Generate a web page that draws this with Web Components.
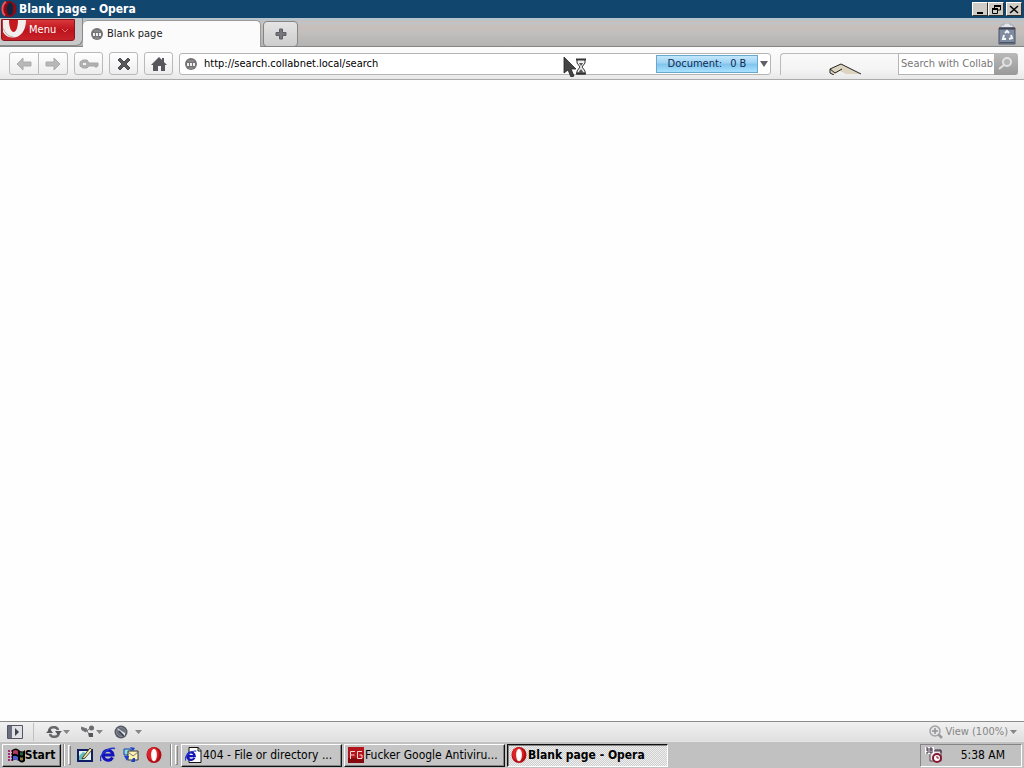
<!DOCTYPE html>
<html lang="en">
<head>
<meta charset="utf-8">
<title>Blank page - Opera</title>
<style>
html, body { margin: 0; height: 100%; }
body { font: 11px/14px "DejaVu Sans Condensed", "Noto Sans", sans-serif; color: #000; overflow: hidden; }
</style>
</head>
<body>
<opera-desktop></opera-desktop>
<script>
const reset = `*{box-sizing:border-box} button,input{font:inherit;color:inherit;margin:0;padding:0;border:0;background:none;border-radius:0;min-width:0;outline:0}
button{display:flex;align-items:center;justify-content:center;white-space:nowrap}`;

function define(name, css, html) {
  customElements.define(name, class extends HTMLElement {
    constructor() {
      super();
      this.attachShadow({ mode: 'open' }).innerHTML = `<style>${reset}${css}</style>${html}`;
    }
  });
}

const opera = `<ellipse cx="8" cy="8" rx="7.5" ry="8" fill="#b30d14"/><ellipse cx="7" cy="7" rx="6" ry="6.5" fill="#dc2228"/><ellipse cx="8" cy="8" rx="3" ry="6.3" fill="#f3e2e0"/><ellipse cx="8" cy="8" rx="1.8" ry="5.500" fill="#fff"/>`;
const ie = `<path d="M12.5 10.500A5 5 0 1 1 13 8H4.500" fill="none" stroke="#1414b8" stroke-width="3"/><path d="M1 14C-2 9 8 0 15 1.500" fill="none" stroke="#2038d0" stroke-width="1.500"/>`;
const icons = {
  opera: [16, 16, opera],
  operaDark: [16, 16, `<ellipse cx="8" cy="8" rx="7.5" ry="8" fill="#8e0b14"/><path d="M5 1C1 3 0 11 4 14.500" stroke="#ee535a" stroke-width="2" fill="none"/><ellipse cx="9" cy="8" rx="3.200" ry="6.500" fill="#102640"/>`],
  menuO: [24, 18, `<path d="M1 0H24C24 10 19 17.500 11 17.500Q4 17.500 1 12Z" fill="#f1eeee"/><path d="M7 0H16C16 8 14 12 11.500 12S7 7 7 0Z" fill="#c51920"/><path d="M1 8Q4 16 11 17" stroke="#b5abab" fill="none"/>`],
  globe: [12, 12, `<circle cx="6" cy="6" r="6" fill="#747476"/><path d="M2 5h2v3H2zM5 5h2v3H5zM8 5h2v3H8z" fill="#eee"/><path d="M3 3h6M4 10h4" stroke="#999"/>`],
  plus: [12, 12, `<path d="M4.500 1h3v3.500H11v3H7.500V11h-3V7.500H1v-3h3.500z" fill="#77767f" stroke="#5d5d63"/>`],
  back: [16, 14, `<path d="M7 1 1 7l6 6V9h8V5H7z" fill="#b8b8b8" stroke="#aaa"/>`],
  forward: [16, 14, `<path d="m9 1 6 6-6 6V9H1V5h8z" fill="#b8b8b8" stroke="#aaa"/>`],
  key: [20, 10, `<path d="M4 1h4l2 3h9v3h-1v1h-2V7h-6L8 9H4L1 7V3z" fill="#b0b0b0" stroke="#a5a5a5"/><path d="M4 4h3v2H4z" fill="#f4f4f4"/>`],
  stop: [16, 16, `<path d="m2 4 2-2 4 4 4-4 2 2-4 4 4 4-2 2-4-4-4 4-2-2 4-4z" fill="#58585b" stroke="#4a4a4d"/>`],
  home: [16, 16, `<path d="M0 9 8 1l3 3V2h2v4l3 3h-2v6h-4v-5H7v5H2V9z" fill="#57575b"/>`],
  down: [8, 6, `<path d="M0 0h8L4 6z" fill="#606068"/>`],
  downSmall: [7, 4, `<path d="M0 0h7L3.500 4z" fill="#85858a"/>`],
  chevron: [8, 5, `<path d="m1 1 3 3 3-3" fill="none" stroke="#e0736f"/>`],
  search: [16, 16, `<circle cx="9" cy="6" r="4" fill="#b5b5b5" stroke="#e2e2e2" stroke-width="2"/><path d="m6 9-5 4" stroke="#e2e2e2" stroke-width="2"/>`],
  trash: [18, 22, `<path d="M1 5h16v16H1z" fill="#7f8ba0" stroke="#4a5265"/><path d="M2 19.500h14" stroke="#4a5265"/><path d="M1 5.500h16" stroke="#3c4353" stroke-width="2"/><path d="M3 4V2h3V0h6v2h3v2" fill="#e4e8ec" stroke="#a2a8b0"/><path d="m7 10 2-2 2 2M13 12l1 3-3 1M8 16H5l1-4" stroke="#f4f6fa" stroke-width="2" fill="none"/>`],
  panel: [16, 14, `<path d="M.5.5h15v13H.500z" fill="#e1e1e5" stroke="#515566"/><path d="M1 1h4v12H1z" fill="#696e7d"/><path d="m8 3 4 4-4 4z" fill="#3d4354"/>`],
  sync: [16, 12, `<path d="M3 6C3 0 11 0 12 4M13 6C13 12 5 12 4 8" fill="none" stroke="#68686d" stroke-width="2.500"/><path d="M9 5h7l-4 4zM0 7h7L4 3z" fill="#55555b"/>`],
  unite: [14, 13, `<circle cx="10.500" cy="3" r="2.500" fill="#6a6a6f"/><path d="M7 8h5v4H8z" fill="#55555b"/><path d="m0 2 6 2-1 3-4-2zM6 6l3-3M6 6l2 3" fill="#707075" stroke="#77777b"/>`],
  turbo: [14, 14, `<circle cx="7" cy="7" r="6.500" fill="#565a66"/><circle cx="7" cy="7" r="4.500" fill="#697080" stroke="#85898f"/><path d="M3 3 11 8v3L7 9z" fill="#e2e4e6"/><path d="m5 6 5 5" stroke="#393d48" stroke-width="1.500"/>`],
  zoom: [14, 14, `<path d="m9 9 4 4" stroke="#999" stroke-width="2.500"/><circle cx="6" cy="6" r="5" fill="#e6e6e6" stroke="#a2a2a6" stroke-width="1.500"/><path d="M3 6h6M6 3v6" stroke="#929296" stroke-width="1.500"/>`],
  windows: [17, 15, `<path d="M0 3h4M0 6h4M0 9h4M0 12h4" stroke="#a02f77" stroke-width="2" stroke-dasharray="2 1"/><path d="M4 2q4-3 7 0t6 0v11q-3 3-6 0t-7 0z" fill="#000"/><path d="M5 3q3-2 5 0v4q-2-2-5-1z" fill="#b8355c"/><path d="M12 4q2 1 3 0v3q-1 1-3 0z" fill="#276044"/><path d="M5 8q3-1 5 1v4q-2-2-5-1z" fill="#5358d0"/><path d="M12 9q2 1 3 0v3q-1 1-3 0z" fill="#8f813b"/>`],
  desktop: [16, 16, `<path d="M1 3h14v11H1z" fill="#e3f1ee" stroke="#101c66" stroke-width="2"/><path d="M2 13v-4l4-4 3 1-1 6z" fill="#65bab5"/><path d="m6 10 7-9 2 2-7 8-3 1z" fill="#f4e8a0" stroke="#222" stroke-width=".8"/>`],
  ie: [16, 16, ie],
  iePage: [17, 16, `<path d="M4 .5h9l3 3v12H4z" fill="#fff" stroke="#111"/><path d="M13 0v4h3" fill="none" stroke="#111"/><g transform="translate(0 3) scale(.75)">${ie}</g>`],
  mail: [16, 16, `<path d="M1 2h7v6H1z" fill="#8bdce5" stroke="#183ba0"/><path d="M5 4h10v9H5z" fill="#fff3b0" stroke="#333"/><path d="m5 5 5 4 5-4" fill="none" stroke="#777"/><path d="m7 0 5 1-2 3zM1 9l3 5 2-5M10 11h2v4h-4" fill="#193ed1"/>`],
  fg: [16, 16, `<path d="M0 0h16v16H0z" fill="#b4141b"/><path d="M0 11h16v5H0z" fill="#85090e"/><path d="M2.500 12V4.500H7M3 8h3.500M14 4.500H9.500v7H14V8h-2.500" stroke="#f5d7d5" fill="none"/>`],
  tray: [17, 16, `<path d="M5 4h11v10H5z" fill="#e8e8e8" stroke="#5c4056"/><path d="M0 0h9v7H0z" fill="#fff"/><path d="M1 1h2v5H1M1 3h2M5 1h2v5H5zM5 3h2M10 3h6v3" fill="none" stroke="#39263f"/><circle cx="12" cy="11" r="4" fill="#fff" stroke="#8a1732" stroke-width="2"/><path d="M12 9v2h2" stroke="#811126" fill="none"/>`],
  min: [10, 9, `<path d="M2 7h6v2H2z"/>`],
  restore: [10, 9, `<path d="M3.500 3V.5h6V5H7M1.500 3.500h5v5h-5z" fill="none" stroke="#000"/><path d="M3 1h7M1 4h6" stroke="#000" stroke-width="2"/>`],
  close: [10, 9, `<path d="m1 1 8 7M9 1 1 8" stroke="#000" stroke-width="1.500"/>`],
  ledge: [34, 12, `<path d="M2 6 13 1 33 11H18L12 8 5 12 2 10z" fill="#dcd4be"/><path d="M2 10V6L13 1l20 10M2 6l5 4 7-4M2 10l4 2" stroke="#222" fill="none"/>`],
  cursor: [24, 20, `<path d="M1 0v16l4-3 3 7 3-1-3-7h5z" fill="#444" stroke="#222" stroke-width=".8"/><path d="M14 3v3l3 4-3 4v3h8v-3l-3-4 3-4V3" fill="#eee" stroke="#333"/><path d="M13 2.500h10M13 16.500h10" stroke="#333" stroke-width="2"/><path d="M16 6h4l-2 3zM15 16l3-4 3 4z" fill="#555"/>`]
};

customElements.define('ui-icon', class extends HTMLElement {
  connectedCallback() {
    if (this.shadowRoot) return;
    const [w, h, art] = icons[this.getAttribute('name')];
    this.attachShadow({ mode: 'open' }).innerHTML = `<style>:host{display:block;flex:none}svg{display:block}</style><svg width="${w}" height="${h}" viewBox="0 0 ${w} ${h}" aria-hidden="true">${art}</svg>`;
  }
});

define('title-bar', `
:host{display:flex;align-items:center;height:18px;background:#11466f;color:#fff;padding:0 2px 0 1px;gap:2px}
h1{flex:1;margin:0;font-size:12px;line-height:18px;font-weight:bold}
.buttons{display:flex}
button{width:16px;height:14px;background:#d0ccc6;border:1px solid;border-color:#fff #333 #333 #fff}
button:last-child{margin-left:2px}`,
`<ui-icon name="operaDark"></ui-icon><h1>Blank page - Opera</h1><div class="buttons"><button aria-label="Minimize"><ui-icon name="min"></ui-icon></button><button aria-label="Restore"><ui-icon name="restore"></ui-icon></button><button aria-label="Close"><ui-icon name="close"></ui-icon></button></div>`);

define('tab-strip', `
:host{display:flex;height:29px;background:linear-gradient(#b8c4cb 0 3px,#d2bbb3 3px 4px,#c0c4c7 4px 6px,#c8beb9 8px,#c2bfbd 14px,#b2b2b2);box-shadow:inset 0 -1px #858585;color:#222}
.corner{width:83px;height:28px;padding:1px 0 0 1px;border-radius:0 0 7px 0;border-right:1px solid #888;border-bottom:1px solid #888;background:linear-gradient(#c5c9cc,#c9c9c9)}
.menu{width:74px;height:22px;justify-content:flex-start;align-items:flex-start;border:1px solid #8b1620;border-radius:0 0 3px 3px;background:linear-gradient(#d9383b,#bd141c 50%,#c8232a);color:#fff;gap:3px}
.menu span{line-height:20px;padding-right:2px}
.menu ui-icon:last-child{padding-top:8px}
.tab{width:178px;margin-top:2px;justify-content:flex-start;background:#fbfbfb;border:1px solid #999;border-width:1px 1px 0 0;border-radius:5px 5px 0 0;padding:0 8px;gap:4px}
.add{width:35px;height:26px;margin:3px 0 0 2px;border:1px solid #858585;border-radius:4px;background:linear-gradient(#e4e4e4,#cdcdcd)}
.trash{margin:5px 8px 0 auto;width:18px;height:22px}`,
`<div class="corner"><button class="menu"><ui-icon name="menuO"></ui-icon><span>Menu</span><ui-icon name="chevron"></ui-icon></button></div><button class="tab"><ui-icon name="globe"></ui-icon><span>Blank page</span></button><button class="add" aria-label="New tab"><ui-icon name="plus"></ui-icon></button><button class="trash" aria-label="Closed tabs"><ui-icon name="trash"></ui-icon></button>`);

define('nav-bar', `
:host{display:flex;align-items:center;height:33px;padding:1px 6px 0 9px;gap:6px;background:linear-gradient(#fcfcfc,#f4f4f4 70%,#e8e8e8);border-bottom:1px solid #aaa}
.tool{width:29px;height:23px;border:1px solid #b9b9b9;border-radius:3px;background:linear-gradient(#fff,#ededed)}
.pair{display:flex}.pair .tool:first-child{width:30px;border-radius:3px 0 0 3px}.pair .tool:last-child{border-left:0;border-radius:0 3px 3px 0}
.address{flex:1;min-width:0;display:flex;align-items:center;height:22px;border:1px solid #b5b5b5;border-radius:3px;background:#fff;padding-left:5px;gap:7px}
.address input{flex:1;height:18px;line-height:18px}
.progress{width:102px;height:18px;border:1px solid #69a8ca;background:linear-gradient(#c4e8fc,#9cd2f5 45%,#7fc3ed 50%,#a9e2ff);display:flex;align-items:center;justify-content:center;gap:8px;color:#102b50;margin-right:-7px}
.drop{width:12px;height:18px}
.slot{width:118px;height:22px;margin-left:3px;border:1px solid #bbb;border-width:1px 0 0 1px;border-radius:4px 0 0 0;display:flex;justify-content:center;align-items:flex-end;padding-left:10px}
.find{display:flex;height:22px;margin-left:-6px;width:120px}
.find input{flex:1;border:1px solid #b5b5b5;border-right:0;background:#fff;padding-left:2px}
.find input::placeholder{color:#777;opacity:1}
.find button{width:24px;background:linear-gradient(#b9b9b9,#999);border-radius:0 3px 3px 0}`,
`<div class="pair"><button class="tool" aria-label="Back"><ui-icon name="back"></ui-icon></button><button class="tool" aria-label="Forward"><ui-icon name="forward"></ui-icon></button></div><button class="tool" aria-label="Wand"><ui-icon name="key"></ui-icon></button><button class="tool" aria-label="Stop"><ui-icon name="stop"></ui-icon></button><button class="tool" aria-label="Home"><ui-icon name="home"></ui-icon></button>
<div class="address"><ui-icon name="globe"></ui-icon><input aria-label="Address" value="http://search.collabnet.local/search"><div class="progress"><span>Document:</span><span>0 B</span></div><button class="drop" aria-label="Address history"><ui-icon name="down"></ui-icon></button></div>
<div class="slot"><ui-icon name="ledge"></ui-icon></div><div class="find"><input aria-label="Search" placeholder="Search with Collab'"><button aria-label="Search"><ui-icon name="search"></ui-icon></button></div>`);

define('status-bar', `
:host{display:flex;align-items:center;height:20px;padding:0 7px;background:linear-gradient(#f1f1f1,#e0e0e0);border-top:1px solid #8d8d8d;color:#858585}
button{height:18px}.group{display:flex;gap:11px;margin-left:10px;padding-left:12px;border-left:1px solid #c0c0c0}.group button{gap:1px}.group button:last-child{gap:7px}.view{margin-left:auto;gap:2px}`,
`<button aria-label="Panels"><ui-icon name="panel"></ui-icon></button><div class="group"><button aria-label="Synchronize"><ui-icon name="sync"></ui-icon><ui-icon name="downSmall"></ui-icon></button><button aria-label="Unite"><ui-icon name="unite"></ui-icon><ui-icon name="downSmall"></ui-icon></button><button aria-label="Turbo"><ui-icon name="turbo"></ui-icon><ui-icon name="downSmall"></ui-icon></button></div><button class="view"><ui-icon name="zoom"></ui-icon><span>View (100%)</span><ui-icon name="downSmall"></ui-icon></button>`);

define('task-button', `
:host{display:block;width:161px}
button{width:100%;height:23px;justify-content:flex-start;padding:0 3px;gap:1px;background:#c5c5c5;border:1px solid;border-color:#fff #111 #111 #fff;box-shadow:inset -1px -1px #858585;font-size:12px}
span{overflow:hidden;text-overflow:ellipsis}
:host([active]) button{border-color:#111 #fff #fff #111;box-shadow:inset 1px 1px #858585;background:repeating-conic-gradient(#eee 0 25%,#cfcfcf 0 50%) 0 0/2px 2px;font-weight:bold}`,
`<button><slot name="icon"></slot><span><slot></slot></span></button>`);

define('task-bar', `
:host{display:flex;align-items:center;height:27px;padding:0 2px;background:#c1c1c1;border-top:1px solid #e5e5e5}
.start{width:59px;height:23px;border:1px solid;border-color:#fff #111 #111 #fff;box-shadow:inset -1px -1px #858585;font-weight:bold;font-size:12px}
.grip{width:3px;height:20px;border:1px solid;border-color:#fff #888 #888 #fff}
.sep{width:2px;height:22px;border-left:1px solid #888;border-right:1px solid #fff}
.quick{display:flex;gap:7px;margin:0 8px 0 6px}
.tasks{display:flex;gap:2px;margin-left:3px}
.tray{margin-left:auto;width:102px;height:23px;border:1px solid;border-color:#858585 #fff #fff #858585;display:flex;align-items:center;justify-content:space-between;padding:0 16px 0 4px;font-size:12px}
.s1{margin:0 3px 0 2px}.s2{margin-right:3px}`,
`<button class="start"><ui-icon name="windows"></ui-icon><span>Start</span></button><i class="sep s1"></i><i class="grip"></i>
<div class="quick"><button aria-label="Show desktop"><ui-icon name="desktop"></ui-icon></button><button aria-label="Internet Explorer"><ui-icon name="ie"></ui-icon></button><button aria-label="Outlook Express"><ui-icon name="mail"></ui-icon></button><button aria-label="Opera"><ui-icon name="opera"></ui-icon></button></div>
<i class="sep s2"></i><i class="grip"></i><div class="tasks"><task-button><ui-icon slot="icon" name="iePage"></ui-icon>404 - File or directory ...</task-button><task-button><ui-icon slot="icon" name="fg"></ui-icon>Fucker Google Antiviru...</task-button><task-button active><ui-icon slot="icon" name="opera"></ui-icon>Blank page - Opera</task-button></div>
<div class="tray"><ui-icon name="tray"></ui-icon><time>5:38 AM</time></div>`);

define('opera-desktop', `
:host{display:flex;flex-direction:column;height:100vh;position:relative}
main{flex:1;background:#fefefe}
.pointer{position:absolute;left:563px;top:57px;pointer-events:none}`,
`<title-bar></title-bar><tab-strip></tab-strip><nav-bar></nav-bar><main></main><status-bar></status-bar><task-bar></task-bar><ui-icon class="pointer" name="cursor"></ui-icon>`);
</script>
</body>
</html>
